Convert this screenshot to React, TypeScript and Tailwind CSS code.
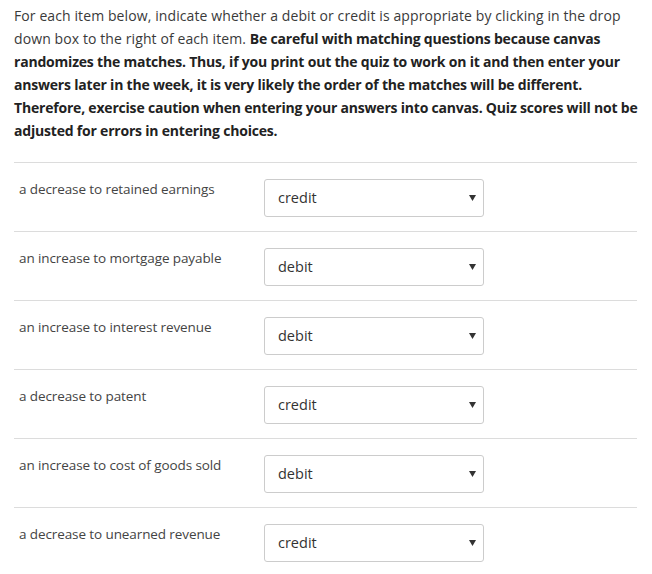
import React from "react";

const rows: [string, string][] = [
  ["a decrease to retained earnings", "credit"],
  ["an increase to mortgage payable", "debit"],
  ["an increase to interest revenue", "debit"],
  ["a decrease to patent", "credit"],
  ["an increase to cost of goods sold", "debit"],
  ["a decrease to unearned revenue", "credit"],
];

export default function App() {
  return (
    <div className="w-[652px] h-[574px] bg-white overflow-hidden" style={{ fontFamily: "'Open Sans', Lato, sans-serif" }}>
      <div className="pl-[14px] pr-[10px] pt-[4px]">
        <p className="text-[14px] leading-[23px] text-[#3a3a3a] tracking-[0.1px] whitespace-nowrap">
          For each item below, indicate whether a debit or credit is appropriate by clicking in the drop
          <br />
          down box to the right of each item.{" "}
          <strong className="font-bold text-[#222] tracking-[-0.2px]">
            Be careful with matching questions because canvas
            <br />
            randomizes the matches. Thus, if you print out the quiz to work on it and then enter your
            <br />
            answers later in the week, it is very likely the order of the matches will be different.
            <br />
            Therefore, exercise caution when entering your answers into canvas. Quiz scores will not be
            <br />
            adjusted for errors in entering choices.
          </strong>
        </p>
        <div className="mt-[20px] w-[623px]">
          {rows.map(([label, val], i) => (
            <div key={i} className="border-t border-[#dcdcdc] h-[69px] flex items-start">
              <div className="w-[250px] pl-[5px] pt-[18px] text-[13.5px] leading-[16px] text-[#444] tracking-[-0.1px]">{label}</div>
              <div className="mt-[16px] w-[220px] h-[38px] border border-[#ccc] rounded-[3px] flex items-center justify-between pl-[13px] pr-[7px]">
                <span className="text-[14.5px] text-[#333]">{val}</span>
                <svg width="7" height="6" viewBox="0 0 7 6"><path d="M0 0 H7 L3.5 6 Z" fill="#333" /></svg>
              </div>
            </div>
          ))}
        </div>
      </div>
    </div>
  );
}
